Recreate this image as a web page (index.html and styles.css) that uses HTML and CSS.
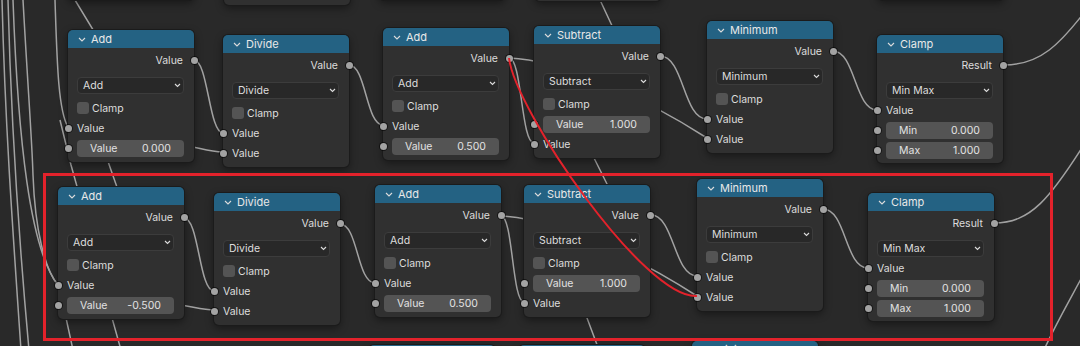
FILE: index.html
```html
<!DOCTYPE html>
<html lang="en">
<head>
  <meta charset="UTF-8">
  <title>Node Editor</title>
  <link rel="stylesheet" href="styles.css">
</head>
<body>

  <div class="canvas">

    <!-- Links behind the nodes -->
    <svg class="wires" width="1080" height="346" viewBox="0 0 1080 346">
      <!-- far links on the left -->
      <path d="M2,0 C5,120 12,220 21,350"/>
      <path d="M8,0 C11,120 18,230 29,350"/>
      <path d="M13,0 C18,140 30,250 58,285"/>
      <path d="M23,0 C28,90 32,140 33,175 C35,230 45,270 58,285"/>
      <path d="M55,0 C57,60 58,110 68,127"/>
      <path d="M75,0 L95,33 L104,150 L118,190 L112,318 L121,350"/>
      <path d="M60,120 L71,165 L78,190 L66,318 L73,350"/>
      <path d="M600,0 L614,30 L594,158 L608,186 L587,318 L599,350"/>

      <!-- row 1 -->
      <path d="M194,60 C208,60 209,133 223,133"/>
      <path d="M170,144 C195,145 205,152 223,152"/>
      <path d="M349,65 C366,65 366,125 383,125"/>
      <path d="M509,58 C522,58 521,143 534,143"/>
      <path d="M509,58 C560,60 640,95 707,138"/>
      <path d="M660,56 C684,56 683,119 707,119"/>
      <path d="M833,51 C855,51 855,110 877,110"/>
      <path d="M1004,65 C1040,65 1060,45 1090,5"/>

      <!-- row 2 -->
      <path d="M184,218 C199,218 199,291 214,291"/>
      <path d="M160,303 C185,304 200,310 214,310"/>
      <path d="M340,224 C358,224 357,283 375,283"/>
      <path d="M501,216 C513,216 512,302 524,302"/>
      <path d="M501,216 C552,218 630,253 697,296"/>
      <path d="M651,215 C674,215 674,276 697,276"/>
      <path d="M823,209 C846,209 845,268 868,268"/>
      <path d="M994,223 C1030,223 1050,200 1090,135"/>
      <path d="M1090,262 C1070,300 1055,325 1044,350"/>
    </svg>

    <!-- Nodes cut off at the top -->
    <div class="node stub s-add0"></div>
    <div class="node stub s-div0"></div>
    <div class="node stub s-add0b"></div>
    <div class="node stub s-sub0"></div>
    <div class="node stub s-clamp0"></div>

    <!-- Row 1 -->
    <div class="node r1-add">
      <div class="node-head"><svg class="chev" width="8" height="5"><path d="M1,1 L4,4 L7,1"/></svg>Add</div>
      <div class="node-body">
        <div class="row out">Value<i class="sock"></i></div>
        <div class="select"><span>Add</span><svg class="drop" width="7" height="5"><path d="M1,1 L3.5,3.5 L6,1"/></svg></div>
        <div class="row check"><span class="box"></span>Clamp</div>
        <div class="row"><i class="sock"></i>Value</div>
        <div class="row"><i class="sock"></i><div class="field"><span>Value</span><span>0.000</span></div></div>
      </div>
    </div>

    <div class="node r1-div">
      <div class="node-head"><svg class="chev" width="8" height="5"><path d="M1,1 L4,4 L7,1"/></svg>Divide</div>
      <div class="node-body">
        <div class="row out">Value<i class="sock"></i></div>
        <div class="select"><span>Divide</span><svg class="drop" width="7" height="5"><path d="M1,1 L3.5,3.5 L6,1"/></svg></div>
        <div class="row check"><span class="box"></span>Clamp</div>
        <div class="row"><i class="sock"></i>Value</div>
        <div class="row"><i class="sock"></i>Value</div>
      </div>
    </div>

    <div class="node r1-add2">
      <div class="node-head"><svg class="chev" width="8" height="5"><path d="M1,1 L4,4 L7,1"/></svg>Add</div>
      <div class="node-body">
        <div class="row out">Value<i class="sock"></i></div>
        <div class="select"><span>Add</span><svg class="drop" width="7" height="5"><path d="M1,1 L3.5,3.5 L6,1"/></svg></div>
        <div class="row check"><span class="box"></span>Clamp</div>
        <div class="row"><i class="sock"></i>Value</div>
        <div class="row"><i class="sock"></i><div class="field"><span>Value</span><span>0.500</span></div></div>
      </div>
    </div>

    <div class="node r1-sub">
      <div class="node-head"><svg class="chev" width="8" height="5"><path d="M1,1 L4,4 L7,1"/></svg>Subtract</div>
      <div class="node-body">
        <div class="row out">Value<i class="sock"></i></div>
        <div class="select"><span>Subtract</span><svg class="drop" width="7" height="5"><path d="M1,1 L3.5,3.5 L6,1"/></svg></div>
        <div class="row check"><span class="box"></span>Clamp</div>
        <div class="row"><i class="sock"></i><div class="field"><span>Value</span><span>1.000</span></div></div>
        <div class="row"><i class="sock"></i>Value</div>
      </div>
    </div>

    <div class="node r1-min">
      <div class="node-head"><svg class="chev" width="8" height="5"><path d="M1,1 L4,4 L7,1"/></svg>Minimum</div>
      <div class="node-body">
        <div class="row out">Value<i class="sock"></i></div>
        <div class="select"><span>Minimum</span><svg class="drop" width="7" height="5"><path d="M1,1 L3.5,3.5 L6,1"/></svg></div>
        <div class="row check"><span class="box"></span>Clamp</div>
        <div class="row"><i class="sock"></i>Value</div>
        <div class="row"><i class="sock"></i>Value</div>
      </div>
    </div>

    <div class="node clamp r1-clamp">
      <div class="node-head"><svg class="chev" width="8" height="5"><path d="M1,1 L4,4 L7,1"/></svg>Clamp</div>
      <div class="node-body">
        <div class="row out">Result<i class="sock"></i></div>
        <div class="select"><span>Min Max</span><svg class="drop" width="7" height="5"><path d="M1,1 L3.5,3.5 L6,1"/></svg></div>
        <div class="row"><i class="sock"></i>Value</div>
        <div class="row"><i class="sock"></i><div class="field"><span>Min</span><span>0.000</span></div></div>
        <div class="row"><i class="sock"></i><div class="field"><span>Max</span><span>1.000</span></div></div>
      </div>
    </div>

    <!-- Row 2 -->
    <div class="node r2-add">
      <div class="node-head"><svg class="chev" width="8" height="5"><path d="M1,1 L4,4 L7,1"/></svg>Add</div>
      <div class="node-body">
        <div class="row out">Value<i class="sock"></i></div>
        <div class="select"><span>Add</span><svg class="drop" width="7" height="5"><path d="M1,1 L3.5,3.5 L6,1"/></svg></div>
        <div class="row check"><span class="box"></span>Clamp</div>
        <div class="row"><i class="sock"></i>Value</div>
        <div class="row"><i class="sock"></i><div class="field"><span>Value</span><span>-0.500</span></div></div>
      </div>
    </div>

    <div class="node r2-div">
      <div class="node-head"><svg class="chev" width="8" height="5"><path d="M1,1 L4,4 L7,1"/></svg>Divide</div>
      <div class="node-body">
        <div class="row out">Value<i class="sock"></i></div>
        <div class="select"><span>Divide</span><svg class="drop" width="7" height="5"><path d="M1,1 L3.5,3.5 L6,1"/></svg></div>
        <div class="row check"><span class="box"></span>Clamp</div>
        <div class="row"><i class="sock"></i>Value</div>
        <div class="row"><i class="sock"></i>Value</div>
      </div>
    </div>

    <div class="node r2-add2">
      <div class="node-head"><svg class="chev" width="8" height="5"><path d="M1,1 L4,4 L7,1"/></svg>Add</div>
      <div class="node-body">
        <div class="row out">Value<i class="sock"></i></div>
        <div class="select"><span>Add</span><svg class="drop" width="7" height="5"><path d="M1,1 L3.5,3.5 L6,1"/></svg></div>
        <div class="row check"><span class="box"></span>Clamp</div>
        <div class="row"><i class="sock"></i>Value</div>
        <div class="row"><i class="sock"></i><div class="field"><span>Value</span><span>0.500</span></div></div>
      </div>
    </div>

    <div class="node r2-sub">
      <div class="node-head"><svg class="chev" width="8" height="5"><path d="M1,1 L4,4 L7,1"/></svg>Subtract</div>
      <div class="node-body">
        <div class="row out">Value<i class="sock"></i></div>
        <div class="select"><span>Subtract</span><svg class="drop" width="7" height="5"><path d="M1,1 L3.5,3.5 L6,1"/></svg></div>
        <div class="row check"><span class="box"></span>Clamp</div>
        <div class="row"><i class="sock"></i><div class="field"><span>Value</span><span>1.000</span></div></div>
        <div class="row"><i class="sock"></i>Value</div>
      </div>
    </div>

    <div class="node r2-min">
      <div class="node-head"><svg class="chev" width="8" height="5"><path d="M1,1 L4,4 L7,1"/></svg>Minimum</div>
      <div class="node-body">
        <div class="row out">Value<i class="sock"></i></div>
        <div class="select"><span>Minimum</span><svg class="drop" width="7" height="5"><path d="M1,1 L3.5,3.5 L6,1"/></svg></div>
        <div class="row check"><span class="box"></span>Clamp</div>
        <div class="row"><i class="sock"></i>Value</div>
        <div class="row"><i class="sock"></i>Value</div>
      </div>
    </div>

    <div class="node clamp r2-clamp">
      <div class="node-head"><svg class="chev" width="8" height="5"><path d="M1,1 L4,4 L7,1"/></svg>Clamp</div>
      <div class="node-body">
        <div class="row out">Result<i class="sock"></i></div>
        <div class="select"><span>Min Max</span><svg class="drop" width="7" height="5"><path d="M1,1 L3.5,3.5 L6,1"/></svg></div>
        <div class="row"><i class="sock"></i>Value</div>
        <div class="row"><i class="sock"></i><div class="field"><span>Min</span><span>0.000</span></div></div>
        <div class="row"><i class="sock"></i><div class="field"><span>Max</span><span>1.000</span></div></div>
      </div>
    </div>

    <!-- Row 3, only the header edges show -->
    <div class="node r3-add"><div class="node-head"></div></div>
    <div class="node r3-sub"><div class="node-head"></div></div>
    <div class="node r3-min"><div class="node-head"><svg class="chev" width="8" height="5"><path d="M1,1 L4,4 L7,1"/></svg>Minimum</div></div>

    <!-- Hand-drawn marks on top -->
    <svg class="marks" width="1080" height="346" viewBox="0 0 1080 346">
      <path d="M509,58 C515,110 645,300 697,296"/>
    </svg>
    <div class="frame"></div>

  </div>

</body>
</html>
```

FILE: styles.css
```css
/* Basic Styles */
body {
  margin: 0;
  padding: 0;
  background-color: #292929;
  font-family: Inter, "DejaVu Sans", sans-serif;
}

.canvas {
  position: relative;
  width: 1080px;
  height: 346px;
  overflow: hidden;
  background-color: #292929;
}

/* Links */
.wires,
.marks {
  position: absolute;
  left: 0;
  top: 0;
}

.wires path {
  fill: none;
  stroke: #a2a2a2;
  stroke-width: 1.5;
}

.marks {
  z-index: 5;
}

.marks path {
  fill: none;
  stroke: #e3222b;
  stroke-width: 2;
}

.frame {
  position: absolute;
  z-index: 6;
  left: 43px;
  top: 173px;
  width: 1010px;
  height: 168px;
  box-sizing: border-box;
  border: 3px solid #e3222b;
}

/* Node Styling */
.node {
  position: absolute;
  width: 126px;
  background-color: #303030;
  border-radius: 5px;
  box-shadow: 0 0 0 1px #1b1b1b, 0 3px 8px rgba(0, 0, 0, 0.45);
  color: #dddddd;
  font-size: 10.5px;
}

.node-head {
  height: 18px;
  display: flex;
  align-items: center;
  gap: 5px;
  padding-left: 10px;
  background-color: #246283;
  border-radius: 5px 5px 0 0;
  color: #e8e8e8;
  font-size: 11px;
}

.chev path,
.drop path {
  fill: none;
  stroke: #dcdcdc;
  stroke-width: 1.1;
}

.node-body {
  padding: 2px 0 4px;
}

.clamp .node-body {
  padding-bottom: 3px;
}

.row {
  position: relative;
  height: 20px;
  display: flex;
  align-items: center;
  padding: 0 10px 0 9px;
}

.row.out {
  justify-content: flex-end;
  padding-right: 11px;
}

.sock {
  position: absolute;
  top: 6.5px;
  left: -3.5px;
  width: 7px;
  height: 7px;
  border-radius: 50%;
  background-color: #a3a3a3;
  box-shadow: 0 0 0 1px rgba(0, 0, 0, 0.55);
}

.row.out .sock {
  left: auto;
  right: -3.5px;
}

/* Dropdown */
.select {
  height: 17px;
  margin: 7px 10px 4px 9px;
  padding: 0 2px 0 5px;
  box-sizing: border-box;
  display: flex;
  align-items: center;
  justify-content: space-between;
  background-color: #282828;
  border: 1px solid #3c3c3c;
  border-radius: 4px;
}

.clamp .select {
  margin-bottom: 1px;
}

/* Checkbox */
.box {
  width: 12px;
  height: 12px;
  margin-right: 3px;
  border-radius: 3px;
  background-color: #545454;
}

/* Number field */
.field {
  flex: 1;
  height: 17px;
  padding: 0 13px;
  display: flex;
  align-items: center;
  justify-content: space-between;
  background-color: #545454;
  border-radius: 4px;
  color: #e2e2e2;
}

/* Node places on the canvas */
.stub { height: 120px; }
.s-add0 { left: 68px; top: -120px; }
.s-div0 { left: 224px; top: -115px; }
.s-add0b { left: 379px; top: -120px; }
.s-sub0 { left: 535px; top: -119px; }
.s-clamp0 { left: 878px; top: -120px; }

.r1-add { left: 68px; top: 30px; }
.r1-div { left: 223px; top: 35px; }
.r1-add2 { left: 383px; top: 28px; }
.r1-sub { left: 534px; top: 26px; }
.r1-min { left: 707px; top: 21px; }
.r1-clamp { left: 877px; top: 35px; }

.r2-add { left: 58px; top: 187px; }
.r2-div { left: 214px; top: 193px; }
.r2-add2 { left: 375px; top: 185px; }
.r2-sub { left: 524px; top: 185px; }
.r2-min { left: 697px; top: 179px; }
.r2-clamp { left: 868px; top: 193px; }

.r3-add { left: 369px; top: 345px; }
.r3-sub { left: 519px; top: 345px; }
.r3-min { left: 692px; top: 341px; }
```
